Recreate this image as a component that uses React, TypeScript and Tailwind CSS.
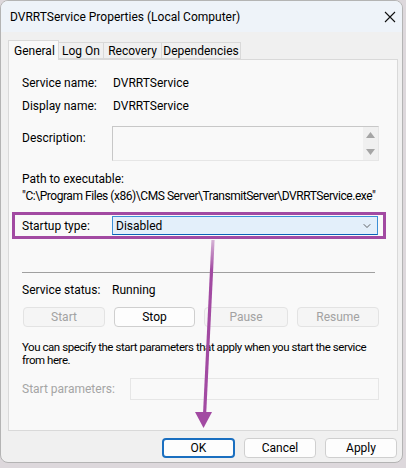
import { ChevronDown } from "lucide-react";

const font = { fontFamily: 'Roboto, "Liberation Sans", sans-serif' };

const Btn = ({ label, disabled, primary, w }: { label: string; disabled?: boolean; primary?: boolean; w: string }) => (
  <div
    className={`${w} h-[20px] flex items-center justify-center rounded-[4px] text-[12px] ${
      disabled
        ? "border border-[#e3e3e3] bg-[#f5f5f5] text-[#a2a2a2]"
        : primary
        ? "border-2 border-[#1a6fc0] bg-[#fdfdfd] text-black"
        : "border border-[#cfcfcf] bg-[#fdfdfd] text-black"
    }`}
  >
    {label}
  </div>
);

export default function App() {
  return (
    <div className="relative w-[406px] h-[468px] bg-[#ddd8dc] overflow-hidden whitespace-nowrap" style={font}>
      <div className="w-[403px] h-[463px] rounded-[8px] border border-[#b4b4b4] bg-[#f0f0f0] overflow-hidden flex flex-col">
        {/* title bar */}
        <div className="h-[31px] bg-[#eef3f9] flex items-center justify-between pl-[9px] pr-[6px]">
          <span className="text-[12px] text-black">DVRRTService Properties (Local Computer)</span>
          <svg width="12" height="12" viewBox="0 0 12 12">
            <path d="M1 1 L11 11 M11 1 L1 11" stroke="#111" strokeWidth="1.1" />
          </svg>
        </div>

        {/* tabs */}
        <div className="flex items-end pl-[7px] mt-[8px] h-[19px] text-[12px]">
          <div className="h-[20px] w-[51px] bg-[#f9f9f9] border border-b-0 border-[#d9d9d9] flex items-start pl-[5px] pt-[1px] relative z-10 -mb-[1px]">
            General
          </div>
          <div className="h-[17px] w-[45px] border border-l-0 border-[#d9d9d9] bg-[#f0f0f0] flex items-center justify-center">Log On</div>
          <div className="h-[17px] w-[58px] border border-l-0 border-[#d9d9d9] bg-[#f0f0f0] flex items-center justify-center">Recovery</div>
          <div className="h-[17px] w-[79px] border border-l-0 border-[#d9d9d9] bg-[#f0f0f0] flex items-center justify-center">Dependencies</div>
        </div>

        {/* panel */}
        <div className="ml-[7px] w-[390px] h-[372px] bg-[#f9f9f9] border border-[#d9d9d9] text-[12px] text-black flex flex-col">
          <div className="flex items-center h-[16px] mt-[15px] pl-[13px]">
            <span className="w-[91px]">Service name:</span>
            <span>DVRRTService</span>
          </div>
          <div className="flex items-center h-[16px] mt-[7px] pl-[13px]">
            <span className="w-[91px]">Display name:</span>
            <span>DVRRTService</span>
          </div>
          <div className="flex items-start h-[35px] mt-[12px] pl-[13px]">
            <span className="w-[90px] mt-[3px]">Description:</span>
            <div className="w-[267px] h-[35px] border border-[#c8c8c8] border-r-[#e6e6e6] border-b-[#e6e6e6] bg-[#f9f9f9] flex justify-end">
              <div className="w-[15px] h-full bg-[#f0f0f0] flex flex-col items-center justify-between py-[5px]">
                <svg width="9" height="6" viewBox="0 0 9 6"><path d="M0 6 L4.5 0 L9 6 Z" fill="#a5a5a5" /></svg>
                <svg width="9" height="6" viewBox="0 0 9 6"><path d="M0 0 L4.5 6 L9 0 Z" fill="#a5a5a5" /></svg>
              </div>
            </div>
          </div>
          <div className="h-[16px] mt-[10px] pl-[13px] flex items-center">Path to executable:</div>
          <div className="h-[16px] mt-[1px] pl-[13px] flex items-center tracking-[-0.45px]">
            "C:\Program Files (x86)\CMS Server\TransmitServer\DVRRTService.exe"
          </div>

          {/* startup type, highlighted */}
          <div className="ml-[3px] mt-[8px] w-[374px] h-[27px] border-[3px] border-[#a24aa2] flex items-center pl-[7px]">
            <span className="w-[90px]">Startup type:</span>
            <div className="w-[266px] h-[19px] bg-[#e3effa] border border-[#3d8fd6] border-b-[#0a62b8] flex items-center justify-between pl-[3px] pr-[4px]">
              <span>Disabled</span>
              <ChevronDown size={12} strokeWidth={1.5} color="#333" />
            </div>
          </div>

          <div className="ml-[13px] mt-[33px] w-[353px] h-px bg-[#a0a0a0]" />

          <div className="flex items-center h-[16px] mt-[9px] pl-[13px]">
            <span className="w-[90px]">Service status:</span>
            <span>Running</span>
          </div>
          <div className="flex gap-[9px] mt-[9px] pl-[14px]">
            <Btn label="Start" disabled w="w-[82px]" />
            <Btn label="Stop" w="w-[81px]" />
            <Btn label="Pause" disabled w="w-[84px]" />
            <Btn label="Resume" disabled w="w-[82px]" />
          </div>
          <div className="mt-[14px] pl-[13px] leading-[13px] text-[11.5px] tracking-[-0.45px]">
            You can specify the start parameters that apply when you start the service
            <br />
            from here.
          </div>
          <div className="flex items-center mt-[11px] pl-[13px]">
            <span className="w-[108px] text-[#a5a5a5]">Start parameters:</span>
            <div className="w-[249px] h-[22px] border border-[#e6e6e6] bg-[#f9f9f9]" />
          </div>
        </div>

        {/* bottom buttons */}
        <div className="flex justify-end gap-[9px] mt-[7px] pr-[5px]">
          <Btn label="OK" primary w="w-[73px]" />
          <Btn label="Cancel" w="w-[72px]" />
          <Btn label="Apply" w="w-[72px]" />
        </div>
      </div>

      {/* annotation arrow */}
      <svg className="absolute left-0 top-0 pointer-events-none" width="406" height="468" viewBox="0 0 406 468">
        <defs>
          <linearGradient id="fade" x1="0" y1="240" x2="0" y2="270" gradientUnits="userSpaceOnUse">
            <stop offset="0" stopColor="#a24aa2" stopOpacity="0.4" />
            <stop offset="1" stopColor="#a24aa2" stopOpacity="1" />
          </linearGradient>
        </defs>
        <path d="M213 240 L204.5 416" stroke="url(#fade)" strokeWidth="3.2" />
        <path d="M195 412 L212 412 L203.5 428 Z" fill="#a24aa2" />
      </svg>
    </div>
  );
}
